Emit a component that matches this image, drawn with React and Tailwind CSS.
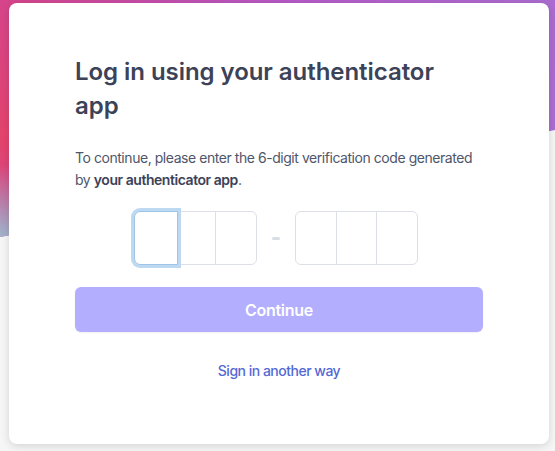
import React from "react";

function CodeGroup({ focusFirst }) {
  return (
    <div className="flex h-[54px] w-[123px] rounded-[6px] border border-[#dcdfe6] bg-white">
      <div
        className={
          focusFirst
            ? "relative -m-px w-[44px] rounded-l-[6px] border border-[#9ec5e8] shadow-[0_0_0_3px_#bcd9f1]"
            : "w-[41px] border-r border-[#dcdfe6]"
        }
      />
      {focusFirst ? (
        <div className="w-[39px] border-r border-[#dcdfe6]" />
      ) : (
        <div className="w-[40px] border-r border-[#dcdfe6]" />
      )}
      <div className="flex-1" />
    </div>
  );
}

export default function App() {
  return (
    <div
      className="relative h-[451px] w-[555px] overflow-hidden bg-[#f6f6f7]"
      style={{ fontFamily: "Inter, 'Noto Sans', sans-serif" }}
    >
      <div className="pointer-events-none absolute left-0 top-0 h-[240px] w-full [clip-path:polygon(0_0,100%_0,100%_130px,0_237px)] bg-[linear-gradient(to_bottom,rgba(160,180,202,0)_0px,rgba(160,180,202,0)_165px,rgba(160,180,202,1)_237px),linear-gradient(to_bottom,rgba(230,68,104,0)_0px,rgba(230,68,104,0.9)_140px,rgba(230,68,104,0)_220px),linear-gradient(100deg,#d6448a_0%,#c150b0_30%,#b55bc9_50%,#a96fd2_100%)] [background-size:70px_100%,90px_100%,100%_100%] bg-no-repeat" />
      <div className="relative pl-[9px] pt-[3px]">
        <div className="flex h-[441px] w-[540px] flex-col rounded-[8px] bg-white px-[66px] pt-[52px] shadow-[0_2px_8px_rgba(0,0,0,0.14)]">
          <h1 className="max-w-[380px] text-[24px] font-semibold leading-[34px] tracking-[-0.05px] text-[#3c4257]">
            Log in using your authenticator app
          </h1>
          <p className="mt-[24px] text-[14px] leading-[22px] tracking-[-0.45px] text-[#4f566b]">
            To continue, please enter the 6-digit verification code generated by{" "}
            <span className="font-semibold text-[#3c4257]">your authenticator app</span>.
          </p>
          <div className="mt-[20px] flex items-center justify-center gap-[15px] pr-[6px]">
            <CodeGroup focusFirst />
            <div className="h-[3px] w-[8px] rounded-[2px] bg-[#d8dde6]" />
            <CodeGroup />
          </div>
          <button className="mt-[22px] flex h-[45px] w-full items-center justify-center rounded-[6px] bg-[#b3aefe] text-[16px] font-semibold tracking-[-0.3px] text-white shadow-[0_1px_2px_rgba(0,0,0,0.06)]">
            Continue
          </button>
          <div className="mt-[28px] text-center text-[14px] font-medium tracking-[-0.5px] text-[#5469d4]">
            Sign in another way
          </div>
        </div>
      </div>
    </div>
  );
}
